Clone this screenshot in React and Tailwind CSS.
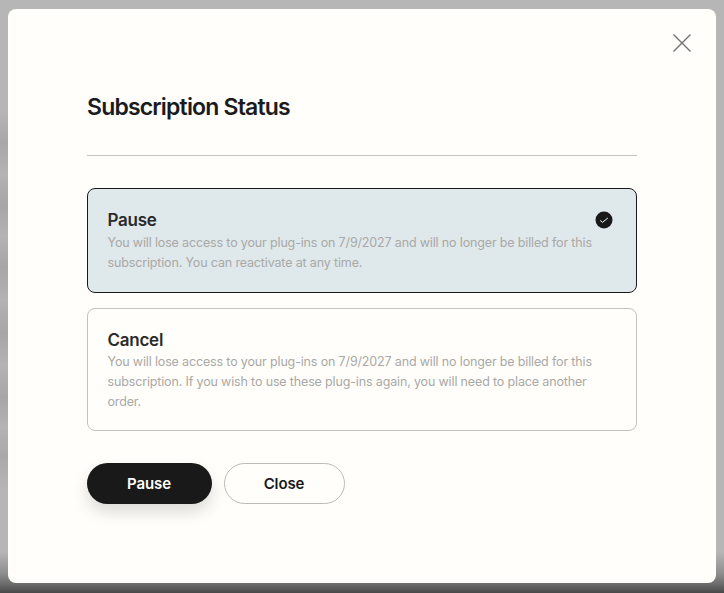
import React from "react";

function Check() {
  return (
    <svg width="18" height="18" viewBox="0 0 18 18" fill="none">
      <circle cx="9" cy="9" r="8.5" fill="#191919" />
      <path d="M5.2 9.4 L7.5 11.4 L12.8 7" stroke="#fffefa" strokeWidth="1" fill="none" />
    </svg>
  );
}

function Option({ title, selected, children, className }) {
  return (
    <div className={"relative rounded-lg border pl-[19.5px] pr-5 pt-[20px] " + className}>
      <div className="text-[17px] leading-[22px] font-semibold tracking-[-0.25px] text-[#2a2a2a]">{title}</div>
      <p className={(selected ? "mt-[2px] " : "mt-[1px] ") + "text-[12.5px] leading-[20px] tracking-[-0.15px] text-[#a9a9a7]"}>{children}</p>
      {selected && (
        <div className="absolute right-[23px] top-[22px]">
          <Check />
        </div>
      )}
    </div>
  );
}

export default function App() {
  return (
    <div className="h-[593px] w-[724px] overflow-hidden bg-[linear-gradient(to_bottom,#b6b6b6_0px,#b6b6b6_552px,#8c8c8c_574px,#6c6c6c_584px,#484848_593px)]">
      <div className="h-[593px] w-[724px] pl-2 pt-[9px] font-['Inter',sans-serif] bg-[linear-gradient(to_bottom,#00000000_110px,#00000014_143px,#00000004_174px,#00000016_205px,#00000004_236px,#00000016_267px,#00000004_300px,#00000016_333px,#00000004_365px,#00000016_397px,#00000004_427px,#00000012_457px,#00000000_490px)] bg-no-repeat bg-[length:8px_100%]">
        <div className="relative flex h-[574px] w-[708px] flex-col rounded-lg bg-[#fffefa] px-[79px] pt-[82px]">
          <button className="absolute right-[24px] top-[24px] text-[#6f6f72]">
            <svg width="20" height="20" viewBox="0 0 20 20" fill="none" stroke="currentColor" strokeWidth="1.3">
              <path d="M1.5 1.5 L18.5 18.5 M18.5 1.5 L1.5 18.5" />
            </svg>
          </button>
          <h1 className="text-[23px] leading-[32px] font-semibold tracking-[-0.82px] text-[#1b1b1d]">Subscription Status</h1>
          <div className="mt-[32px] h-px w-full bg-[#c4c2be]" />
          <Option title="Pause" selected className="mt-[32px] h-[105px] border-[#191919] bg-[#dfe8eb]">
            You will lose access to your plug-ins on 7/9/2027 and will no longer be billed for this subscription. You can reactivate at any time.
          </Option>
          <Option title="Cancel" className="mt-[15px] h-[123px] border-[#c4c2be]">
            You will lose access to your plug-ins on 7/9/2027 and will no longer be billed for this subscription. If you wish to use these plug-ins again, you will need to place another order.
          </Option>
          <div className="mt-[32px] flex gap-3">
            <button className="h-[41px] w-[125px] rounded-full bg-[#191919] pr-[1px] pt-[1px] text-[15px] font-semibold tracking-[-0.1px] text-[#fffefa] shadow-[0_8px_16px_rgba(0,0,0,0.14)]">Pause</button>
            <button className="h-[41px] w-[121px] rounded-full border border-[#bdbbb7] pr-[1px] pt-[1px] text-[15px] font-semibold tracking-[-0.1px] text-[#191919]">Close</button>
          </div>
        </div>
      </div>
    </div>
  );
}
